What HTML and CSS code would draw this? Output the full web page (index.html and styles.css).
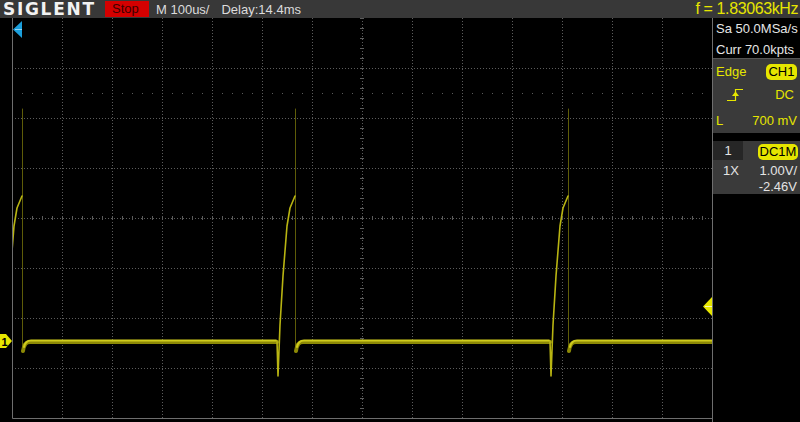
FILE: index.html
```html
<!DOCTYPE html>
<html>
<head>
<meta charset="utf-8">
<title>SIGLENT</title>
<link rel="stylesheet" href="styles.css">
</head>
<body>
<div class="scope">
  <header class="topbar">
    <div class="logo">SIGLENT</div>
    <div class="stop">Stop</div>
    <div class="tb">M 100us/</div>
    <div class="delay">Delay:14.4ms</div>
    <div class="freq">f = 1.83063kHz</div>
  </header>
  <div class="main">
    <svg class="plot" width="713" height="404" viewBox="0 18 713 404" xmlns="http://www.w3.org/2000/svg">
      <defs>
        <clipPath id="grid-clip"><rect x="13" y="18" width="699" height="400"/></clipPath>
      </defs>
      <g class="grid" stroke="#5c5c5c" stroke-width="1" fill="none">
        <g stroke-dasharray="1 2">
          <path d="M62.5 18V418M112.5 18V418M162.5 18V418M212.5 18V418M262.5 18V418M312.5 18V418M362.5 18V418M412.5 18V418M462.5 18V418M512.5 18V418M562.5 18V418M612.5 18V418M662.5 18V418"/>
          <path d="M12 68.5H712M12 118.5H712M12 168.5H712M12 218.5H712M12 268.5H712M12 318.5H712M12 368.5H712"/>
        </g>
        <path d="M12 93.5H712" stroke-dasharray="1 9"/>
        <path d="M12 218H712" stroke-width="4" stroke-dasharray="1 9"/>
        <path d="M362.5 18V418" stroke-width="4" stroke-dasharray="1 9" transform="translate(-0.5 0)"/>
      </g>
      <g class="border" stroke="#6e6e6e" stroke-width="1" fill="none">
        <path d="M12.5 18V418.5H712.5"/>
        <path d="M712.5 18V422"/>
      </g>
      <g clip-path="url(#grid-clip)" fill="none" stroke-linejoin="round" stroke-linecap="round">
        <g stroke="#5e5c08" stroke-width="1">
          <path d="M22.5 109V352M295.5 109V352M568.5 109V352"/>
        </g>
        <g stroke="#8c8906" stroke-width="4">
          <path d="M23 351C24 344 26 342 30 342L277 342"/>
          <path d="M296 351C297 344 299 342 303 342L550 342"/>
          <path d="M569 351C570 344 572 342 576 342L712 342"/>
        </g>
        <g stroke="#cfcb1c" stroke-width="2">
          <path d="M24 347C25 342 27 340.5 31 340.5L276 340.5"/>
          <path d="M297 347C298 342 300 340.5 304 340.5L549 340.5"/>
          <path d="M570 347C571 342 573 340.5 577 340.5L712 340.5"/>
        </g>
        <g stroke="#b8b412" stroke-width="1.6">
          <path d="M5 341L5 376L7 325L10 276L14 226L17 208L22 196"/>
          <path d="M277 341L278 376L280 325L283 276L287 226L290 208L295 196"/>
          <path d="M550 341L551 376L553 325L556 276L560 226L563 208L568 196"/>
        </g>
      </g>
      <g class="markers">
        <polygon points="13,29.5 22,21 22,38" fill="#1b9fdc"/>
        <path d="M15 29.5H22" stroke="#8fd6f6" stroke-width="1"/>
        <polygon points="0,334 6,334 12,341 6,348 0,348" fill="#e6e600"/>
        <text x="1.5" y="345.5" class="ch-label">1</text>
        <polygon points="703,306.5 712,297 712,316" fill="#e6e600"/>
        <path d="M705 306.5H712" stroke="#f8f8b0" stroke-width="1"/>
      </g>
    </svg>
    <aside class="side">
      <div class="acq">
        <div>Sa 50.0MSa/s</div>
        <div>Curr 70.0kpts</div>
      </div>
      <div class="trig">
        <span class="t-left">Edge</span>
        <span class="badge">CH1</span>
        <span class="t-left icon-cell">
          <svg class="edge-icon" width="17" height="13" viewBox="0 0 17 13" xmlns="http://www.w3.org/2000/svg">
            <path d="M0 12.5H8.5V1.5H16" fill="none" stroke="#e6e600" stroke-width="1.2"/>
            <polygon points="8.5,3.5 12,8 5,8" fill="#e6e600"/>
          </svg>
        </span>
        <span class="t-right dc">DC</span>
        <span class="t-left">L</span>
        <span class="t-right">700 mV</span>
      </div>
      <div class="gap"></div>
      <div class="chan">
        <div class="chan-head">
          <span class="tab">1</span>
          <span class="badge wide">DC1M</span>
        </div>
        <div class="chan-row">
          <span class="probe">1X</span>
          <span>1.00V/</span>
        </div>
        <div class="chan-row last">
          <span></span>
          <span>-2.46V</span>
        </div>
      </div>
    </aside>
  </div>
</div>
</body>
</html>
```
FILE: styles.css
```css
html, body {
  margin: 0;
  padding: 0;
  background: #000;
}
body {
  width: 800px;
  height: 422px;
  overflow: hidden;
  font-family: "Liberation Sans", Arial, sans-serif;
}
.scope {
  width: 800px;
  height: 422px;
  display: flex;
  flex-direction: column;
}
.topbar {
  display: flex;
  align-items: center;
  height: 18px;
  background: #383838;
  flex: none;
}
.logo {
  flex: none;
  width: 96px;
  margin-left: 3px;
  font-family: "DejaVu Sans", sans-serif;
  font-weight: bold;
  font-size: 17px;
  line-height: 18px;
  letter-spacing: 1.7px;
  color: #f2f2f2;
  white-space: nowrap;
}
.stop {
  flex: none;
  margin-left: 6px;
  width: 44px;
  height: 16px;
  box-sizing: border-box;
  padding-left: 7px;
  background: #d40000;
  color: #3c0000;
  font-size: 13px;
  line-height: 16px;
}
.tb {
  margin-left: 7px;
  color: #dcdcdc;
  font-size: 13px;
}
.delay {
  margin-left: 12px;
  color: #dcdcdc;
  font-size: 13px;
}
.freq {
  margin-left: auto;
  margin-right: 2px;
  color: #e6e600;
  font-size: 16px;
  letter-spacing: -0.4px;
}
.main {
  display: flex;
  height: 404px;
}
.plot {
  display: block;
  flex: none;
}
.ch-label {
  font-family: "Liberation Sans", Arial, sans-serif;
  font-weight: bold;
  font-size: 11px;
  fill: #000;
}
.side {
  width: 87px;
  display: flex;
  flex-direction: column;
  font-size: 13px;
}
.acq {
  height: 40px;
  border-bottom: 1px solid #555;
  padding-left: 3px;
  color: #e6e6e6;
  line-height: 21px;
  white-space: nowrap;
}
.trig {
  height: 74px;
  box-sizing: border-box;
  padding: 4px 3px 0 3px;
  background: #3a3a3a;
  display: grid;
  grid-template-columns: 1fr auto;
  grid-template-rows: 17px 28px 25px;
  align-items: center;
  color: #e6e600;
}
.icon-cell {
  display: flex;
  padding-left: 11px;
}
.edge-icon {
  display: block;
}
.t-right {
  justify-self: end;
}
.dc {
  margin-right: 3px;
}
.badge {
  justify-self: end;
  width: 31px;
  height: 16px;
  border-radius: 5px;
  background: #e6e600;
  color: #000;
  text-align: center;
  line-height: 16px;
}
.badge.wide {
  width: 40px;
  margin-top: 3px;
  margin-right: 2px;
}
.gap {
  height: 8px;
}
.chan {
  height: 53px;
  background: #3a3a3a;
  color: #e4e4e4;
}
.chan-head {
  display: flex;
  justify-content: space-between;
  align-items: flex-start;
  height: 20px;
}
.tab {
  width: 30px;
  height: 19px;
  background: #262626;
  text-align: center;
  line-height: 19px;
}
.chan-row {
  display: flex;
  justify-content: space-between;
  padding: 2px 3px 0 10px;
  line-height: 16px;
}
.chan-row.last {
  padding-top: 0;
  line-height: 15px;
}
```
